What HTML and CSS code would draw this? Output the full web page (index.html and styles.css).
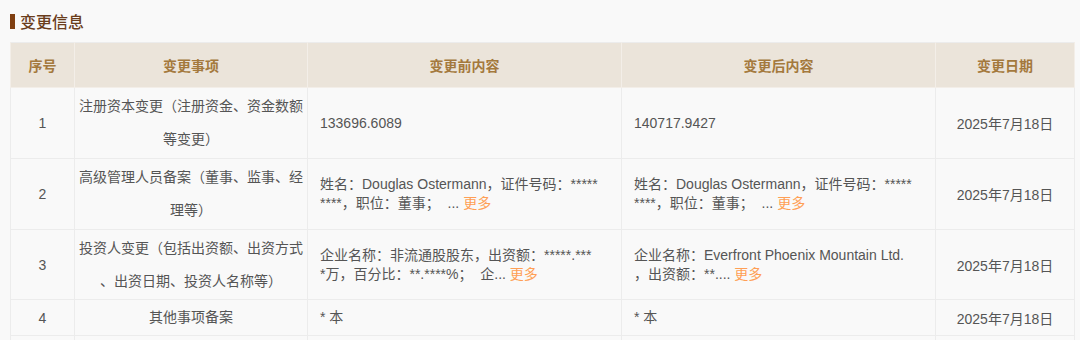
FILE: index.html
```html
<!DOCTYPE html>
<html lang="zh-CN">
<head>
<meta charset="utf-8">
<title>变更信息</title>
<link rel="stylesheet" href="styles.css">
</head>
<body>
<div class="page">
  <h2 class="title"><span class="title-bar"></span>变更信息</h2>
  <table class="grid">
    <colgroup>
      <col class="c-no"><col class="c-item"><col class="c-before"><col class="c-after"><col class="c-date">
    </colgroup>
    <thead>
      <tr class="head">
        <th>序号</th><th>变更事项</th><th>变更前内容</th><th>变更后内容</th><th>变更日期</th>
      </tr>
    </thead>
    <tbody>
      <tr class="r-tall">
        <td class="no">1</td>
        <td class="item">注册资本变更（注册资金、资金数额<br>等变更）</td>
        <td class="content">133696.6089</td>
        <td class="content">140717.9427</td>
        <td class="date">2025年7月18日</td>
      </tr>
      <tr class="r-tall">
        <td class="no">2</td>
        <td class="item">高级管理人员备案（董事、监事、经<br>理等）</td>
        <td class="content"><span class="ln">姓名：Douglas Ostermann，证件号码：*****</span><br><span class="ln">****，职位：董事；&nbsp; ... <a class="more">更多</a></span></td>
        <td class="content"><span class="ln">姓名：Douglas Ostermann，证件号码：*****</span><br><span class="ln">****，职位：董事；&nbsp; ... <a class="more">更多</a></span></td>
        <td class="date">2025年7月18日</td>
      </tr>
      <tr class="r-mid">
        <td class="no">3</td>
        <td class="item">投资人变更（包括出资额、出资方式<br>、出资日期、投资人名称等）</td>
        <td class="content"><span class="ln">企业名称：非流通股股东，出资额：*****.***</span><br><span class="ln">*万，百分比：**.****%；&nbsp; 企... <a class="more">更多</a></span></td>
        <td class="content"><span class="ln">企业名称：Everfront Phoenix Mountain Ltd.</span><br><span class="ln">，出资额：**.... <a class="more">更多</a></span></td>
        <td class="date">2025年7月18日</td>
      </tr>
      <tr class="r-short">
        <td class="no">4</td>
        <td class="item">其他事项备案</td>
        <td class="content">* 本</td>
        <td class="content">* 本</td>
        <td class="date">2025年7月18日</td>
      </tr>
      <tr class="r-short">
        <td class="no">&nbsp;</td>
        <td class="item">&nbsp;</td>
        <td class="content">&nbsp;</td>
        <td class="content">&nbsp;</td>
        <td class="date">&nbsp;</td>
      </tr>
    </tbody>
  </table>
</div>
</body>
</html>
```

FILE: styles.css
```css
html, body {
  margin: 0;
  padding: 0;
  background: #f9f9f9;
}
body {
  font-family: "Liberation Sans", "Noto Sans CJK SC", sans-serif;
  color: #555555;
  font-size: 14px;
}
.page {
  padding: 0 7px 0 10px;
}
.title {
  display: flex;
  align-items: center;
  gap: 5px;
  margin: 0;
  height: 42px;
  font-size: 16px;
  font-weight: 500;
  color: #6a3d1c;
  font-family: "Noto Sans CJK SC", sans-serif;
}
.title-bar {
  display: inline-block;
  width: 5px;
  height: 15px;
  background: #7f3f12;
}
.grid {
  width: 1064px;
  border-collapse: collapse;
  table-layout: fixed;
  border: 1px solid #ececec;
}
.c-no { width: 64px; }
.c-item { width: 233px; }
.c-before { width: 314px; }
.c-after { width: 314px; }
.c-date { width: 139px; }
.grid th {
  height: 44px;
  padding: 0;
  background: #ebe4da;
  color: #a4793d;
  font-weight: bold;
  font-size: 14px;
  font-family: "Noto Sans CJK SC", sans-serif;
  border: 1px solid #f3eee8;
  border-top: none;
  text-align: center;
}
.grid td {
  border: 1px solid #ececec;
  padding: 0;
  vertical-align: middle;
}
.r-tall { height: 71px; }
.r-mid { height: 70px; }
.r-short { height: 36px; }
.no {
  text-align: center;
}
.item {
  text-align: center;
  line-height: 33px;
  padding: 0 4px !important;
}
.content {
  line-height: 19px;
  padding: 0 12px !important;
}
.ln {
  white-space: nowrap;
}
.date {
  text-align: center;
}
.more {
  color: #ff9f55;
  text-decoration: none;
}
```
